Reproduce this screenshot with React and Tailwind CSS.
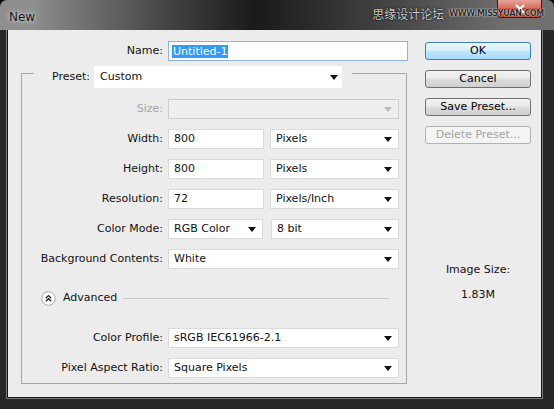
import React from "react";

function Arrow({ disabled }) {
  return (
    <svg width="8" height="5" viewBox="0 0 8 5" className="shrink-0">
      <path d="M0 0H8L4 5Z" fill={disabled ? "#bcbcbc" : "#111"} />
    </svg>
  );
}

function Select({ value, className = "", disabled }) {
  return (
    <div
      className={`flex h-[20px] items-center justify-between border pl-[5px] ${
        disabled ? "border-[#cdcdcd] bg-[#efefef]" : "border-[#dadada] bg-white"
      } ${className}`}
    >
      <span>{value}</span>
      <Arrow disabled={disabled} />
    </div>
  );
}

function Input({ value, className = "" }) {
  return (
    <div className={`flex h-[20px] items-center border border-[#dadada] bg-white pl-[5px] ${className}`}>
      {value}
    </div>
  );
}

function Row({ label, muted, children }) {
  return (
    <div className="flex h-[20px] items-center">
      <div className={`w-[141px] text-right ${muted ? "text-[#a5a5a5]" : ""}`}>{label}</div>
      <div className="ml-[5px] flex">{children}</div>
    </div>
  );
}

function Button({ children, variant }) {
  const styles = {
    ok: "border-[#3c7fb1] bg-[linear-gradient(#eaf6fd,#d9f0fc_45%,#bee6fd_50%,#a7d9f5)] text-black",
    normal: "border-[#707070] bg-[linear-gradient(#f2f2f2,#ebebeb_45%,#dddddd_50%,#cfcfcf)] text-black",
    disabled: "border-[#adb2b5] bg-[#f4f4f4] text-[#a3a3a3]",
  };
  return (
    <div
      className={`flex h-[18px] w-[106px] items-center justify-center rounded-[3px] border ${styles[variant]}`}
    >
      {children}
    </div>
  );
}

function AdvancedIcon() {
  return (
    <svg width="15" height="15" viewBox="0 0 15 15" className="shrink-0">
      <circle cx="7.5" cy="7.5" r="6.8" fill="#fff" stroke="#a9a9a9" />
      <path d="M4.8 7.2L7.5 4.6L10.2 7.2M4.8 10.3L7.5 7.7L10.2 10.3" fill="none" stroke="#222" strokeWidth="1.3" />
    </svg>
  );
}

export default function App() {
  return (
    <div className="h-[409px] w-[554px] overflow-hidden bg-[#0c0c0c] font-['DejaVu_Sans',sans-serif] text-[11px] text-[#111]">
      <div className="flex h-full flex-col rounded-t-[7px] bg-[#262626]">
        {/* title bar */}
        <div className="relative flex h-[30px] rounded-t-[7px] bg-linear-to-r from-[#8e8e8e] from-[6%] via-[#1a1a1a] via-[46%] to-[#707070] to-[92%]">
          <span className="ml-[9px] mt-[8px] h-[16px] text-[12px] font-normal text-[#161616] [text-shadow:0_0_6px_#d8d8d8,0_0_3px_#c8c8c8]">
            New
          </span>
          <div className="ml-auto mr-[12px] flex h-[18px] w-[45px] items-center justify-center rounded-b-[4px] border border-t-0 border-[#3a1a1a] bg-[linear-gradient(#e8a59a,#d2705f_45%,#c0402c_50%,#b0381f)]">
            <svg width="12" height="10" viewBox="0 0 12 10">
              <path d="M2 1L10 9M10 1L2 9" stroke="#fff" strokeWidth="2.4" />
            </svg>
          </div>
          <div className="absolute right-[10px] top-[8px] flex items-center gap-[5px]">
            <span className="font-['Noto_Sans_CJK_SC',sans-serif] text-[12px] leading-none text-[#cfcfcf] [text-shadow:0_0_1px_#000,0_0_2px_#000]">
              思缘设计论坛
            </span>
            <span className="text-[8px] font-bold leading-none tracking-[-0.3px] text-[#2a2a2a] [text-shadow:0_0_1px_#fff,0_0_2px_#ddd]">
              WWW.MISSYUAN.COM
            </span>
          </div>
        </div>

        {/* frame + client */}
        <div className="flex flex-1 pb-[12px] pl-[8px] pr-[13px]">
          <div className="flex h-[367px] w-[533px] bg-[#ececec] shadow-[0_0_0_1px_#151515,0_0_0_2px_#7c7c7c]">
            {/* left column */}
            <div className="ml-[13px] flex w-[388px] flex-col">
              <div className="mt-[11px] flex h-[20px] items-center">
                <div className="w-[142px] text-right">Name:</div>
                <div className="ml-[5px] flex h-[20px] w-[240px] items-center border border-[#8fb4dc] bg-white pl-[3px]">
                  <span className="bg-[#3399ff] px-[1px] leading-[13px] text-white">Untitled-1</span>
                </div>
              </div>

              <div className="mt-[12px] flex h-[311px] w-[386px] flex-col border border-[#a6a6a6]">
                <div className="-mt-[8px] ml-[12px] flex h-[22px] w-[318px] items-center bg-[#ececec] pl-[18px]">
                  <span>Preset:</span>
                  <Select value="Custom" className="ml-[4px] h-[22px] w-[248px] border-transparent pr-[3px]" />
                </div>

                <div className="mt-[11px] flex flex-col gap-[10px]">
                  <Row label="Size:" muted>
                    <Select value="" disabled className="w-[231px] pr-[6px]" />
                  </Row>
                  <Row label="Width:">
                    <Input value="800" className="w-[96px]" />
                    <Select value="Pixels" className="ml-[6px] w-[129px] pr-[6px]" />
                  </Row>
                  <Row label="Height:">
                    <Input value="800" className="w-[96px]" />
                    <Select value="Pixels" className="ml-[6px] w-[129px] pr-[6px]" />
                  </Row>
                  <Row label="Resolution:">
                    <Input value="72" className="w-[96px]" />
                    <Select value="Pixels/Inch" className="ml-[6px] w-[129px] pr-[6px]" />
                  </Row>
                  <Row label="Color Mode:">
                    <Select value="RGB Color" className="w-[95px] pr-[6px]" />
                    <Select value="8 bit" className="ml-[8px] w-[128px] pr-[6px]" />
                  </Row>
                  <Row label="Background Contents:">
                    <Select value="White" className="w-[231px] pr-[6px]" />
                  </Row>
                </div>

                <div className="ml-[19px] mr-[17px] mt-[21px] flex h-[16px] items-center">
                  <AdvancedIcon />
                  <span className="ml-[7px]">Advanced</span>
                  <div className="ml-[6px] h-px flex-1 bg-[#c4c4c4]" />
                </div>

                <div className="mt-[22px] flex flex-col gap-[10px]">
                  <Row label="Color Profile:">
                    <Select value="sRGB IEC61966-2.1" className="w-[231px] pr-[6px]" />
                  </Row>
                  <Row label="Pixel Aspect Ratio:">
                    <Select value="Square Pixels" className="w-[231px] pr-[6px]" />
                  </Row>
                </div>
              </div>
            </div>

            {/* right column */}
            <div className="ml-[16px] flex w-[106px] flex-col">
              <div className="mt-[12px] flex flex-col gap-[10px]">
                <Button variant="ok">OK</Button>
                <Button variant="normal">Cancel</Button>
                <Button variant="normal">Save Preset...</Button>
                <Button variant="disabled">Delete Preset...</Button>
              </div>
              <div className="mt-[118px] text-center">Image Size:</div>
              <div className="mt-[8px] text-center">1.83M</div>
            </div>
          </div>
        </div>
      </div>
    </div>
  );
}
